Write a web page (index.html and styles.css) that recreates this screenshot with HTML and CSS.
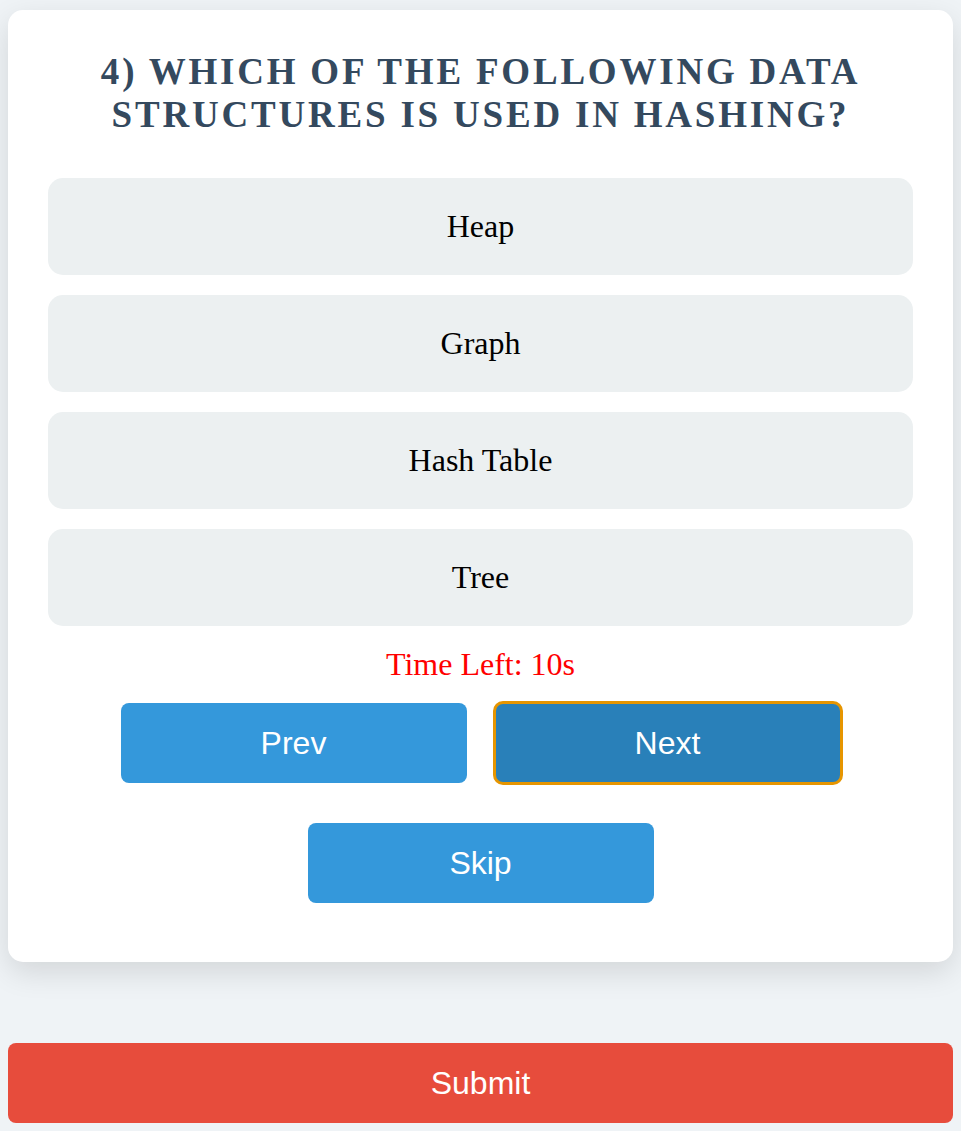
FILE: index.html
```html
<!DOCTYPE html>
<html>
<head>
<meta charset="utf-8">
<link rel="stylesheet" href="styles.css">
</head>
<body>
<div class="card">
  <h2 class="question">4) Which of the following data structures is used in hashing?</h2>
  <div class="options">
    <div class="option">Heap</div>
    <div class="option">Graph</div>
    <div class="option">Hash Table</div>
    <div class="option">Tree</div>
  </div>
  <div class="timer">Time Left: 10s</div>
  <div class="nav-row">
    <button class="btn">Prev</button>
    <button class="btn btn-active">Next</button>
  </div>
  <div class="skip-row">
    <button class="btn">Skip</button>
  </div>
</div>
<button class="submit">Submit</button>
</body>
</html>
```

FILE: styles.css
```css
html, body {
  margin: 0;
  padding: 0;
}
body {
  background: #eff3f6;
  padding: 10px 8px 8px 8px;
  font-family: "Liberation Serif", "Times New Roman", serif;
}
.card {
  background: #ffffff;
  border-radius: 15px;
  padding: 40px 40px 59px 40px;
  box-shadow: 0 10px 30px rgba(0, 0, 0, 0.12);
}
.question {
  margin: 0 0 42px 0;
  text-align: center;
  text-transform: uppercase;
  color: #34495e;
  font-size: 37px;
  line-height: 43px;
  letter-spacing: 2.8px;
  font-weight: bold;
}
.options {
  display: flex;
  flex-direction: column;
  gap: 20px;
}
.option {
  background: #ecf0f1;
  border-radius: 15px;
  height: 97px;
  display: flex;
  align-items: center;
  justify-content: center;
  font-size: 32px;
  color: #000;
}
.timer {
  margin-top: 20px;
  text-align: center;
  color: #ff0000;
  font-size: 32px;
  line-height: 36px;
}
.nav-row {
  margin-top: 21px;
  display: flex;
  justify-content: center;
  gap: 28px;
}
.skip-row {
  margin-top: 40px;
  display: flex;
  justify-content: center;
}
.btn {
  width: 346px;
  height: 80px;
  border: none;
  border-radius: 8px;
  background: #3498db;
  color: #ffffff;
  font-family: "Liberation Sans", Arial, sans-serif;
  font-size: 32px;
  padding: 0;
}
.btn-active {
  background: #2980b9;
  outline: 3px solid #e69500;
  outline-offset: -1px;
}
.submit {
  display: block;
  width: 100%;
  margin-top: 81px;
  height: 80px;
  border: none;
  border-radius: 8px;
  background: #e74c3c;
  color: #ffffff;
  font-family: "Liberation Sans", Arial, sans-serif;
  font-size: 32px;
  padding: 0;
}
```
